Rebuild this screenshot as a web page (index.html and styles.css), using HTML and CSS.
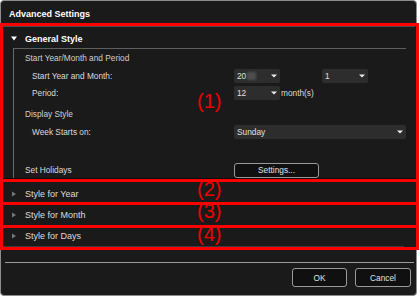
FILE: index.html
```html
<!DOCTYPE html>
<html>
  <head>
    <title>Advanced Settings</title>
    <link rel="stylesheet" href="styles.css">
  </head>
  <body>
    <div class="shot">
      <div class="dialog">
        <div class="title">Advanced Settings</div>

        <!-- General Style (open) -->
        <div class="section open">
          <div class="sec-head">
            <svg class="tri" width="6" height="5" viewBox="0 0 6 5"><path d="M0 0.5H6L3 4.5Z" fill="#fff"/></svg>
            <span class="bold">General Style</span>
          </div>
          <div class="group-box">
            <div class="grp">Start Year/Month and Period</div>
            <div class="row">
              <span class="lbl">Start Year and Month:</span>
              <div class="select small">
                <span>20<span class="blur"></span></span>
                <svg width="6" height="4" viewBox="0 0 6 4"><path d="M0 0.5H6L3 3.5Z" fill="#eee"/></svg>
              </div>
              <div class="select small gap">
                <span>1</span>
                <svg width="6" height="4" viewBox="0 0 6 4"><path d="M0 0.5H6L3 3.5Z" fill="#eee"/></svg>
              </div>
            </div>
            <div class="row">
              <span class="lbl">Period:</span>
              <div class="select small">
                <span>12</span>
                <svg width="6" height="4" viewBox="0 0 6 4"><path d="M0 0.5H6L3 3.5Z" fill="#eee"/></svg>
              </div>
              <span class="unit">month(s)</span>
            </div>
            <div class="grp second">Display Style</div>
            <div class="row">
              <span class="lbl">Week Starts on:</span>
              <div class="select wide">
                <span>Sunday</span>
                <svg width="6" height="4" viewBox="0 0 6 4"><path d="M0 0.5H6L3 3.5Z" fill="#eee"/></svg>
              </div>
            </div>
            <div class="row holidays">
              <span class="lbl">Set Holidays</span>
              <div class="btn settings">Settings...</div>
            </div>
          </div>
        </div>

        <!-- collapsed sections -->
        <div class="section closed first">
          <div class="sec-head">
            <svg class="tri" width="6" height="6" viewBox="0 0 6 6"><path d="M1 0.5V5.5L5 3Z" fill="#777"/></svg>
            <span>Style for Year</span>
          </div>
        </div>
        <div class="section closed">
          <div class="sec-head">
            <svg class="tri" width="6" height="6" viewBox="0 0 6 6"><path d="M1 0.5V5.5L5 3Z" fill="#777"/></svg>
            <span>Style for Month</span>
          </div>
        </div>
        <div class="section closed">
          <div class="sec-head">
            <svg class="tri" width="6" height="6" viewBox="0 0 6 6"><path d="M1 0.5V5.5L5 3Z" fill="#777"/></svg>
            <span>Style for Days</span>
          </div>
        </div>

        <div class="footer">
          <div class="btn ok">OK</div>
          <div class="btn cancel">Cancel</div>
        </div>
      </div>

      <!-- red annotation marks over the dialog -->
      <div class="mark m1"></div>
      <div class="mark m2"></div>
      <div class="mark m3"></div>
      <div class="mark m4"></div>
      <span class="num n1">(1)</span>
      <span class="num n2">(2)</span>
      <span class="num n3">(3)</span>
      <span class="num n4">(4)</span>
    </div>
  </body>
</html>
```

FILE: styles.css
```css
body {
  margin: 0;
  background-color: #ffffff;
  font-family: "Liberation Sans", Arial, sans-serif;
}
.shot {
  position: relative;
  width: 420px;
  height: 297px;
}
.dialog {
  width: 415px;
  height: 294px;
  border: 1px solid #8c8c8c;
  border-radius: 4px;
  background-color: #1a1a1a;
  color: #dcdcdc;
  font-size: 8.3px;
}
.title {
  height: 25px;
  line-height: 26px;
  padding-left: 8px;
  font-size: 9px;
  font-weight: bold;
  color: #ffffff;
}
.bold {
  font-weight: bold;
  color: #ffffff;
}
/* section rows */
.section {
  margin-right: 1px;
}
.section.open {
  border-top: 1px solid #4a4a4a;
  border-bottom: 1px solid #0a0a0a;
}
.section.closed {
  height: 20px;
  border-bottom: 1px solid #3a3a3a;
  margin-right: 12px;
}
.section.first {
  margin-top: 5px;
}
.sec-head {
  display: flex;
  align-items: center;
  height: 21px;
  padding-top: 2px;
  box-sizing: border-box;
  padding-left: 10px;
  font-size: 9px;
}
.closed .sec-head {
  height: 20px;
  padding-top: 0;
}
.tri {
  margin-right: 8px;
}
/* box with the options */
.group-box {
  margin-left: 12px;
  margin-right: 9px;
  border-top: 1px solid #5e5e5e;
  border-left: 1px solid #6a6a6a;
  padding-left: 11px;
  padding-top: 1px;
  height: 128px;
}
.grp {
  height: 17px;
  line-height: 17px;
  color: #d0d0d0;
}
.grp.second {
  margin-top: 5px;
}
.row {
  display: flex;
  align-items: center;
  height: 17px;
  padding-left: 7px;
}
.row .lbl {
  width: 202px;
}
.row.holidays {
  padding-left: 0;
  margin-top: 22px;
  height: 16px;
}
.row.holidays .lbl {
  width: 209px;
}
.select {
  display: flex;
  justify-content: space-between;
  align-items: center;
  height: 14px;
  padding: 0 3px 0 3px;
  box-sizing: border-box;
  background-color: #2d2d2d;
  border-radius: 2px;
  color: #e0e0e0;
}
.select.small {
  width: 46px;
}
.select.gap {
  margin-left: 42px;
}
.select.wide {
  width: 172px;
}
.blur {
  display: inline-block;
  width: 9px;
  height: 8px;
  margin-left: 1px;
  vertical-align: -1px;
  background-color: #4e4e4e;
  filter: blur(1px);
}
.unit {
  margin-left: 1px;
}
/* buttons */
.btn {
  display: flex;
  align-items: center;
  justify-content: center;
  box-sizing: border-box;
  border: 1px solid #9a9a9a;
  border-radius: 3px;
  background-color: #101010;
  color: #e0e0e0;
}
.settings {
  width: 85px;
  height: 15px;
}
.footer {
  display: flex;
  justify-content: flex-end;
  gap: 8px;
  margin: 15px 2px 0 4px;
  padding-top: 5px;
  padding-right: 3px;
  border-top: 1px solid #9c9c9c;
}
.ok {
  width: 55px;
  height: 19px;
}
.cancel {
  width: 56px;
  height: 19px;
}
/* red annotations */
.mark {
  position: absolute;
  left: 0;
  width: 419px;
  box-sizing: border-box;
  border: 3px solid #ff0000;
}
.m1 {
  top: 23px;
  height: 159px;
}
.m2 {
  top: 179px;
  height: 26px;
}
.m3 {
  top: 202px;
  height: 26px;
}
.m4 {
  top: 225px;
  height: 25px;
}
.num {
  position: absolute;
  left: 197px;
  font-size: 20px;
  line-height: 20px;
  color: #ee0000;
}
.n1 {
  top: 91px;
}
.n2 {
  top: 179px;
}
.n3 {
  top: 201px;
}
.n4 {
  top: 224px;
}
```
